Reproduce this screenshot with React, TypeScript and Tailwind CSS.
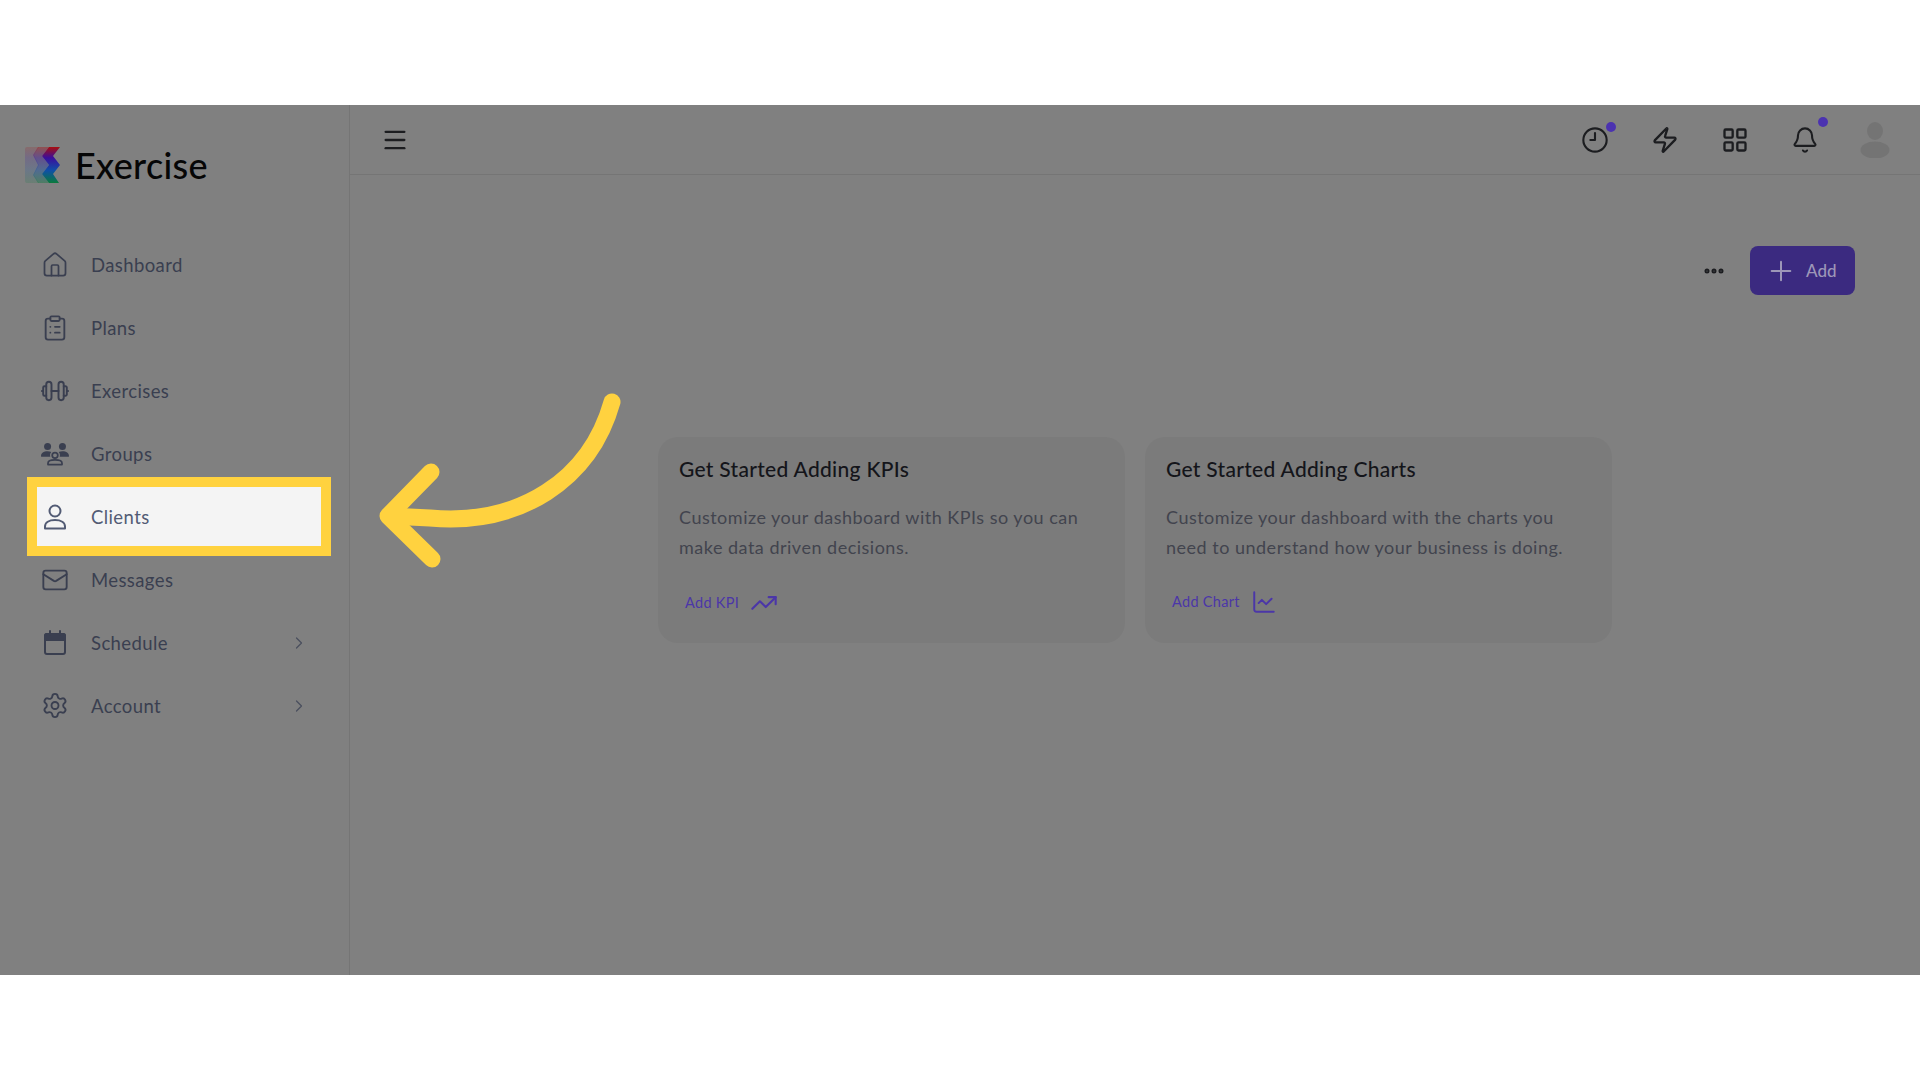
import { Bell, ChartLine, ChevronRight, ClipboardList, Clock9, Ellipsis, House, LayoutGrid, Mail, Menu, Plus, Settings, TrendingUp, Zap } from 'lucide-react';

const font = { fontFamily: '"Lato", "Liberation Sans", sans-serif' };

const DumbbellIcon = () => (
  <svg width="32" height="24" viewBox="0 0 32 24" fill="none" stroke="currentColor" strokeWidth="2.200" strokeLinecap="round" strokeLinejoin="round">
    <rect x="6" y="1.500" width="6" height="21" rx="3" />
    <rect x="20" y="1.500" width="6" height="21" rx="3" />
    <path d="M12 12h8M6 6.500H4A1.500 1.500 0 0 0 2.500 8v8A1.500 1.500 0 0 0 4 17.500h2M26 6.500h2A1.500 1.500 0 0 1 29.500 8v8a1.500 1.500 0 0 1-1.500 1.500h-2M1 12h1.500M29.500 12H31" />
  </svg>
);

const GroupIcon = () => (
  <svg width="32" height="26" viewBox="0 0 32 26" fill="currentColor">
    <circle cx="7.500" cy="4.500" r="4" />
    <circle cx="24.500" cy="4.500" r="4" />
    <path d="M0 15.500C0 11.800 3 9.800 7.500 9.800c1.600 0 3.100.3 4.300 1-1 1.100-1.500 2.500-1.400 4 0 .5.100 1 .3 1.400H1c-.6 0-1-.2-1-.7zM32 15.500c0-3.700-3-5.700-7.500-5.700-1.600 0-3.100.3-4.300 1 1 1.100 1.500 2.500 1.400 4 0 .5-.1 1-.3 1.400H31c.6 0 1-.2 1-.7z" />
    <circle cx="16" cy="14.500" r="3.200" fill="none" stroke="currentColor" strokeWidth="2" />
    <path d="M8 25v-1.500C8 21 11 19.800 16 19.800s8 1.200 8 3.700V25z" fill="none" stroke="currentColor" strokeWidth="2" strokeLinejoin="round" />
  </svg>
);

const ClientIcon = () => (
  <svg width="24" height="26" viewBox="0 0 24 26" fill="none" stroke="currentColor" strokeWidth="2" strokeLinejoin="round">
    <circle cx="12" cy="7" r="5.500" />
    <path d="M2 24.500v-2C2 18.500 6 16 12 16s10 2.500 10 6.500v2z" />
  </svg>
);

const CalendarIcon = () => (
  <svg width="24" height="26" viewBox="0 0 24 26" fill="none" stroke="currentColor" strokeWidth="2" strokeLinecap="round">
    <rect x="2" y="4" width="20" height="20" rx="2" />
    <path d="M2 6a2 2 0 0 1 2-2h16a2 2 0 0 1 2 2v4H2z" fill="currentColor" />
    <path d="M7 1v4M17 1v4" />
  </svg>
);

const LogoMark = () => (
  <svg width="36" height="36" viewBox="0 0 36 36">
    <defs>
      <linearGradient id="logoGrad" x1="0" y1="0" x2="0" y2="1">
        <stop offset="0" stopColor="#a80f0f" />
        <stop offset="0.300" stopColor="#3b0d9c" />
        <stop offset="0.650" stopColor="#0f4fa8" />
        <stop offset="1" stopColor="#0a7a3c" />
      </linearGradient>
    </defs>
    <path d="M2 0h12l-5 8 5 10-5 10 5 8H2a2 2 0 0 1-2-2V2a2 2 0 0 1 2-2z" fill="url(#logoGrad)" opacity="0.18" />
    <path d="M13 0h11l-7 9 7 9-7 9 7 9H13l-5-8 5-10-5-10z" fill="url(#logoGrad)" opacity="0.42" />
    <path d="M24 0h11l-7 9 7 9-7 9 6 9H24l-7-9 7-9-7-9z" fill="url(#logoGrad)" />
  </svg>
);

const Avatar = () => (
  <svg width="30" height="36" viewBox="0 0 30 36" fill="#747474">
    <ellipse cx="15" cy="9" rx="8" ry="9" />
    <ellipse cx="15" cy="28" rx="14.500" ry="8.500" />
  </svg>
);

const navItems = [
  { label: 'Dashboard', icon: <House size={32} strokeWidth={1.500} /> },
  { label: 'Plans', icon: <ClipboardList size={30} strokeWidth={1.600} /> },
  { label: 'Exercises', icon: <DumbbellIcon /> },
  { label: 'Groups', icon: <GroupIcon /> },
  { label: 'Clients', icon: <ClientIcon />, active: true },
  { label: 'Messages', icon: <Mail size={30} strokeWidth={1.600} /> },
  { label: 'Schedule', icon: <CalendarIcon />, more: true },
  { label: 'Account', icon: <Settings size={29} strokeWidth={1.600} />, more: true },
];

const NavRow = ({ label, icon, active, more }: { label: string; icon: React.ReactNode; active?: boolean; more?: boolean }) => {
  if (active) {
    return (
      <div className="-my-2 h-[79px] -ml-[1px] border-[10px] border-[#ffd23f] bg-[#f4f4f4] flex items-center pl-[4px] pr-2 text-[#525b74]">
        <span className="w-[28px] flex justify-center">{icon}</span>
        <span className="ml-[22px] pt-[2px] text-[18.500px] tracking-[0.4px]">{label}</span>
      </div>
    );
  }
  return (
    <div className="h-[63px] flex items-center pl-[13px] pr-[22px] text-[#3a3f50]">
      <span className="w-[28px] flex justify-center shrink-0">{icon}</span>
      <span className="ml-[22px] pt-[2px] text-[18.500px] tracking-[0.4px]">{label}</span>
      {more && <ChevronRight size={20} strokeWidth={1.500} className="ml-auto text-[#4a4f5e]" />}
    </div>
  );
};

const EmptyCard = ({ title, body, link, icon }: { title: string; body: string[]; link: string; icon: React.ReactNode }) => (
  <div className="w-[467px] h-[206px] rounded-[20px] bg-[#7b7b7b] pt-[17px] px-[21px]">
    <h3 className="text-[21px] leading-[30px] font-medium text-[#14151a] tracking-[0.3px]">{title}</h3>
    <p className="mt-[18px] text-[18px] leading-[30px] text-[#42444e] tracking-[0.5px]">
      {body.map((line) => (
        <span key={line} className="block whitespace-nowrap">{line}</span>
      ))}
    </p>
    <div className="mt-[27px] ml-[6px] flex items-center gap-[11px] text-[#4b36a8]">
      <span className="text-[14.500px] tracking-[0.3px]">{link}</span>
      {icon}
    </div>
  </div>
);

const HeaderIcon = ({ children, dot }: { children: React.ReactNode; dot?: string }) => (
  <div className="relative w-[70px] flex justify-center text-[#1c1d20]">
    {children}
    {dot && <span className={`absolute w-[10px] h-[10px] rounded-full bg-[#4b32b0] ${dot}`} />}
  </div>
);

export default function App() {
  return (
    <div className="w-[1920px] h-[1080px] bg-white overflow-hidden relative" style={font}>
      <div className="h-[105px]" />
      <div className="h-[870px] bg-[#808080] flex">
        <aside className="w-[350px] shrink-0 border-r border-[#757575] pl-[28px] pr-[18px]">
          <div className="-ml-[3px] mt-[42px] flex items-center gap-[14px]">
            <LogoMark />
            <span className="text-[36px] leading-[36px] text-[#060606] font-medium tracking-[0.3px]">Exercise</span>
          </div>
          <nav className="mt-[50px] flex flex-col">
            {navItems.map((item) => (
              <NavRow key={item.label} {...item} />
            ))}
          </nav>
        </aside>
        <main className="flex-1">
          <header className="h-[70px] border-b border-[#757575] flex items-center justify-between pl-[31px] pr-[10px]">
            <Menu size={28} strokeWidth={2} className="text-[#1c1d20]" />
            <div className="flex items-center">
              <HeaderIcon dot="top-[-4px] right-[14px]"><Clock9 size={28} strokeWidth={1.800} /></HeaderIcon>
              <HeaderIcon><Zap size={28} strokeWidth={2} /></HeaderIcon>
              <HeaderIcon><LayoutGrid size={28} strokeWidth={2} /></HeaderIcon>
              <HeaderIcon dot="top-[-9px] right-[12px]"><Bell size={28} strokeWidth={1.800} /></HeaderIcon>
              <HeaderIcon><Avatar /></HeaderIcon>
            </div>
          </header>
          <div className="mt-[71px] flex items-center justify-end gap-[24px] pr-[65px]">
            <Ellipsis size={24} strokeWidth={3} className="text-[#1c1d20]" />
            <button className="w-[105px] h-[49px] rounded-[8px] bg-[#3b2a80] flex items-center pl-[15px] gap-[9px] text-[#9d97b8]">
              <Plus size={32} strokeWidth={1.500} />
              <span className="text-[17px] font-medium">Add</span>
            </button>
          </div>
          <div className="mt-[142px] ml-[308px] flex gap-[20px]">
            <EmptyCard
              title="Get Started Adding KPIs"
              body={['Customize your dashboard with KPIs so you can', 'make data driven decisions.']}
              link="Add KPI"
              icon={<TrendingUp size={28} strokeWidth={1.800} />}
            />
            <EmptyCard
              title="Get Started Adding Charts"
              body={['Customize your dashboard with the charts you', 'need to understand how your business is doing.']}
              link="Add Chart"
              icon={<ChartLine size={26} strokeWidth={1.800} />}
            />
          </div>
        </main>
      </div>
      <svg className="absolute left-[370px] top-[390px]" width="260" height="185" viewBox="370 390 260 185" fill="none" stroke="#ffd23f" strokeWidth="17" strokeLinecap="round" strokeLinejoin="round">
        <path d="M612 402C590 480 520 526 430 518L389 516" />
        <path d="M431 472L388 516L432 559" />
      </svg>
    </div>
  );
}
